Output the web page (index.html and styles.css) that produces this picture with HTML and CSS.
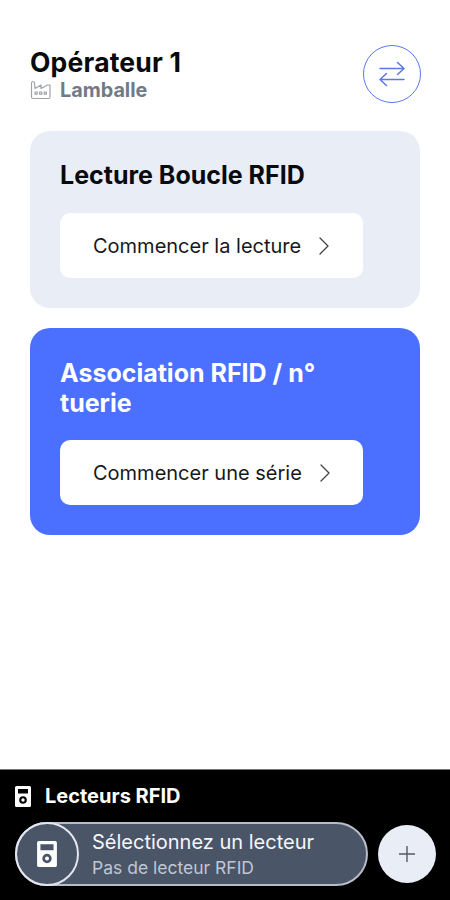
FILE: index.html
```html
<!DOCTYPE html>
<html lang="fr">
<head>
  <meta charset="UTF-8">
  <meta name="viewport" content="width=device-width, initial-scale=1.0">
  <title>Lecteurs RFID</title>
  <link rel="stylesheet" href="styles.css">
</head>
<body>
  <header class="header">
    <div>
      <h1>Opérateur 1</h1>
      <div class="site">
        <svg class="site-icon" width="21" height="20" viewBox="0 0 21 20">
          <path d="M1.500 3a1.500 1.500 0 0 1 3 0L5 8.500l6-3.500v3.500l6.500-3.500h2.500V17a1.500 1.500 0 0 1-1.500 1.500H3A1.500 1.500 0 0 1 1.500 17z"/>
          <path d="M5 12h2.200v2.200H5zM9.600 12h2.200v2.200H9.600zM14.200 12h2.200v2.200h-2.200z"/>
        </svg>
        <span>Lamballe</span>
      </div>
    </div>
    <button class="switch" aria-label="Changer">
      <svg width="28" height="28" viewBox="0 0 28 28">
        <path d="M2 8.500h24M19.500 2.500l6.500 6-6.500 6"/>
        <path d="M26 19.500H2M8.500 13.500l-6.500 6 6.500 6"/>
      </svg>
    </button>
  </header>

  <main>
    <section class="card">
      <h2>Lecture Boucle RFID</h2>
      <button class="action">
        <span>Commencer la lecture</span>
        <svg width="10" height="18" viewBox="0 0 10 18"><path d="M1 1l8 8-8 8"/></svg>
      </button>
    </section>
    <section class="card card-blue">
      <h2>Association RFID / n° tuerie</h2>
      <button class="action">
        <span>Commencer une série</span>
        <svg width="10" height="18" viewBox="0 0 10 18"><path d="M1 1l8 8-8 8"/></svg>
      </button>
    </section>
  </main>

  <footer class="footer">
    <div class="footer-title">
      <svg width="16" height="21" viewBox="0 0 16 21">
        <path fill="#fff" fill-rule="evenodd" d="M1.500 0h13A1.500 1.500 0 0 1 16 1.500v18a1.500 1.500 0 0 1-1.500 1.500h-13A1.500 1.500 0 0 1 0 19.500v-18A1.500 1.500 0 0 1 1.500 0zM3 3v4.500h10V3zM8 10.200a3.800 3.800 0 1 0 0 7.600 3.800 3.800 0 0 0 0-7.600z"/>
        <circle cx="8" cy="14" r="1.700" fill="#fff"/>
      </svg>
      <h3>Lecteurs RFID</h3>
    </div>
    <div class="readers">
      <div class="reader">
        <div class="reader-icon">
          <svg width="20" height="26" viewBox="0 0 16 21">
            <path fill="#fff" fill-rule="evenodd" d="M1.500 0h13A1.500 1.500 0 0 1 16 1.500v18a1.500 1.500 0 0 1-1.500 1.500h-13A1.500 1.500 0 0 1 0 19.500v-18A1.500 1.500 0 0 1 1.500 0zM2.700 2.700v4.800h10.600V2.700zM8 10.300a3.800 3.800 0 1 0 0 7.600 3.800 3.800 0 0 0 0-7.600z"/>
            <circle cx="8" cy="14.100" r="1.600" fill="#fff"/>
          </svg>
        </div>
        <div class="reader-text">
          <div class="reader-name">Sélectionnez un lecteur</div>
          <div class="reader-info">Pas de lecteur RFID</div>
        </div>
      </div>
      <button class="add" aria-label="Ajouter">
        <svg width="16" height="16" viewBox="0 0 16 16"><path d="M8 0v16M0 8h16"/></svg>
      </button>
    </div>
  </footer>
</body>
</html>
```
FILE: styles.css
```css
* { box-sizing: border-box; }
body { margin: 0; height: 900px; display: flex; flex-direction: column; background: #fff; color: #080a0e; font-family: Inter, sans-serif; }
h1, h2, h3 { margin: 0; font-weight: 700; }
button { border: none; padding: 0; font-family: inherit; color: inherit; }
svg { display: block; flex: none; }

.header { display: flex; justify-content: space-between; align-items: flex-start; padding: 45px 29px 0 30px; }
.header h1 { font-size: 26.500px; line-height: 32px; margin-top: 1px; letter-spacing: 0.200px; }
.site { display: flex; align-items: center; gap: 9px; height: 24px; font-size: 19.800px; font-weight: 700; color: #727a87; }
.site-icon { fill: none; stroke: #a0a3a8; stroke-width: 1.2; stroke-linejoin: round; }
.switch { display: flex; align-items: center; justify-content: center; width: 58px; height: 58px; border: 1.500px solid #5b78f5; border-radius: 50%; background: #fff; }
.switch svg { fill: none; stroke: #5b76ee; stroke-width: 1.500; stroke-linecap: round; stroke-linejoin: round; }

main { display: flex; flex-direction: column; gap: 20px; padding: 28px 30px 0; }
.card { height: 177px; padding: 29px 30px 0; border-radius: 20px; background: #e9edf6; }
.card h2 { font-size: 25px; line-height: 30px; }
.card-blue { height: 207px; padding-top: 30px; background: #4b70ff; }
.card-blue h2 { color: #fff; width: 300px; }
.action { display: flex; align-items: center; gap: 18px; width: 303px; height: 65px; margin-top: 23px; padding-left: 33px; border-radius: 10px; background: #fff; font-size: 20px; color: #16181c; }
.action svg { fill: none; stroke: #444; stroke-width: 1.300; stroke-linecap: round; stroke-linejoin: round; }
.card-blue .action { margin-top: 22px; }

.footer { height: 131px; margin-top: auto; padding: 15px 14px 0 15px; border-top: 1px solid #777; background: #000; color: #fff; }
.footer-title { display: flex; align-items: center; gap: 14px; height: 22px; }
.footer-title h3 { font-size: 20px; line-height: 24px; }
.readers { display: flex; align-items: center; gap: 10px; margin-top: 15px; }
.reader { display: flex; align-items: center; width: 353px; height: 64px; border: 2px solid #b8bcc6; border-radius: 32px; background: #4a5568; }
.reader-icon { display: flex; align-items: center; justify-content: center; width: 64px; height: 64px; margin-left: -2px; border: 2px solid #e3e6ee; border-radius: 50%; }
.reader-text { padding-left: 13px; padding-top: 1px; }
.reader-name { font-size: 20px; line-height: 26px; color: #f5f7fb; }
.reader-info { font-size: 17.500px; line-height: 25px; color: #c0c7d4; }
.add { display: flex; align-items: center; justify-content: center; width: 58px; height: 58px; border-radius: 50%; background: #e9edf6; }
.add svg { fill: none; stroke: #555860; stroke-width: 1.400; }
```
